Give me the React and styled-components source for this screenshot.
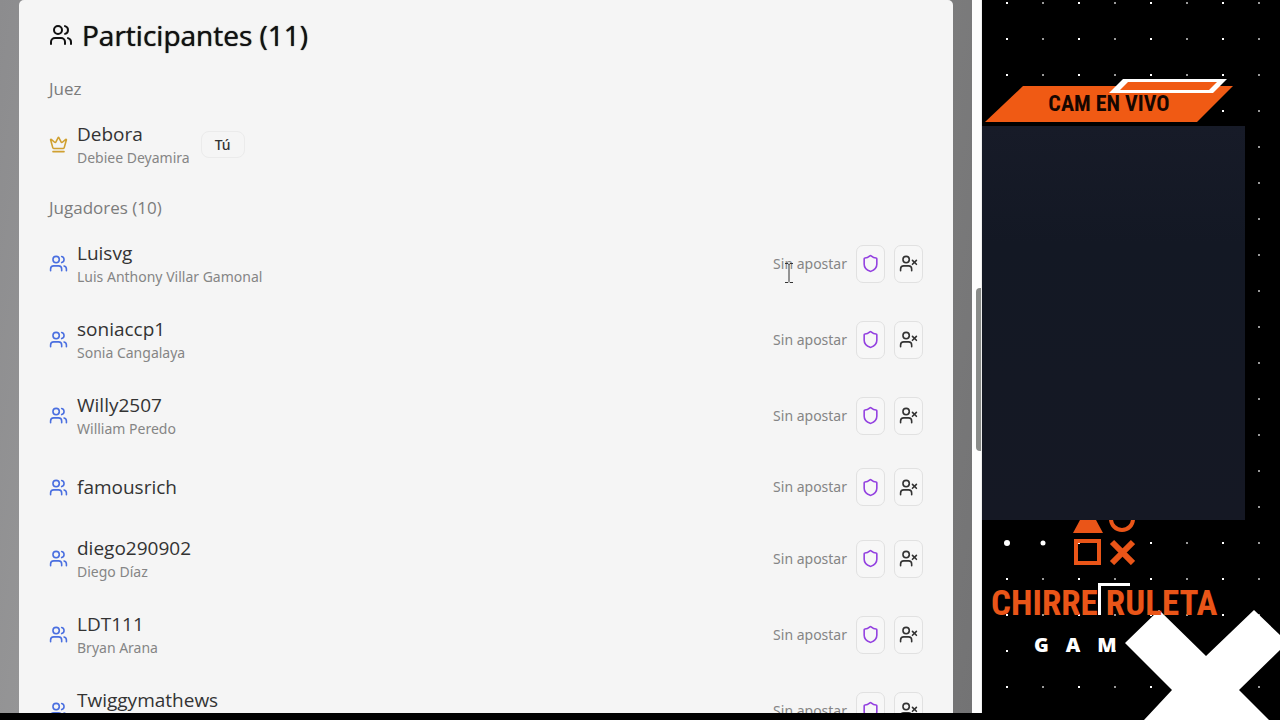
import React from 'react';
import styled, { createGlobalStyle } from 'styled-components';
import { Crown, Shield, Users, UserX } from 'lucide-react';
// /////////////////////////////////////////////////////////////////////////////////////////////////

const ORANGE = '#f05a14';
const BRAND_ORANGE = '#ea5518';
const SMALL_FONT = "'Noto Sans', 'Open Sans', sans-serif";
const CONDENSED_FONT = "'Roboto Condensed', 'DejaVu Sans Condensed', sans-serif";

const players = [
  { name: 'Luisvg', fullName: 'Luis Anthony Villar Gamonal', pointer: true },
  { name: 'soniaccp1', fullName: 'Sonia Cangalaya' },
  { name: 'Willy2507', fullName: 'William Peredo' },
  { name: 'famousrich' },
  { name: 'diego290902', fullName: 'Diego Díaz' },
  { name: 'LDT111', fullName: 'Bryan Arana' },
  { name: 'Twiggymathews', fullName: '\u00a0' },
];

const GlobalStyle = createGlobalStyle`
  * {
    box-sizing: border-box;
  }
  body {
    margin: 0;
    background-color: #000;
    font-family: 'Open Sans', 'Noto Sans', sans-serif;
  }
  h1, h2, p, ul {
    margin: 0;
    padding: 0;
    font-weight: 400;
  }
`;

const Page = styled.div`
  display: grid;
  height: 100vh;
  overflow: hidden;
  grid-template-columns: minmax(0, 1fr) 298px;
`;

const Browser = styled.main`
  display: flex;
  min-height: 0;
  overflow: hidden;
  margin-bottom: 7px;
  background-color: #fdfdfd;
`;

const Backdrop = styled.div`
  flex: 1;
  display: flex;
  padding: 0 19px;
  background: linear-gradient(100deg, #8c8c8e, #a0a0a0 30%, #8b8b8b 60%, #737374);
`;

const Panel = styled.section`
  flex: 1;
  padding: 16px 30px;
  border-radius: 5px 5px 0 0;
  background-color: #f5f5f5;
`;

const ScrollTrack = styled.div`
  width: 10px;
  display: flex;
  padding: 40vh 0 0 4px;
  border-right: 1px solid #eee;
`;

const ScrollThumb = styled.div`
  flex: 1;
  height: 163px;
  border-radius: 4px 0 0 4px;
  background-color: #8a8c8a;
`;

const Title = styled.h1`
  gap: 9px;
  display: flex;
  color: #111;
  font-size: 28px;
  line-height: 38px;
  align-items: center;
  margin-bottom: 23px;
  text-shadow: 0 0 1px #111;
`;

const Label = styled.h2`
  color: #7c7c7c;
  font-size: 17px;
  line-height: 24px;
  margin-bottom: 10px;
`;

const List = styled.ul`
  gap: 9px;
  display: flex;
  list-style: none;
  flex-direction: column;
  margin-bottom: 18px;
`;

const Row = styled.li`
  gap: 9px;
  display: flex;
  padding: 10px 0;
  align-items: center;
  color: ${({ $iconColor }) => $iconColor};
`;

const Name = styled.p`
  color: #333;
  font-size: 19px;
  line-height: 26px;
`;

const FullName = styled.p`
  color: #858585;
  font-size: 14px;
  line-height: 21px;
  font-family: ${SMALL_FONT};
`;

const Badge = styled.span`
  color: #333;
  padding: 0 13px;
  font-size: 14px;
  margin-left: 2px;
  font-weight: 500;
  line-height: 25px;
  border-radius: 8px;
  border: 1px solid #ebebeb;
  font-family: ${SMALL_FONT};
`;

const Status = styled.span`
  color: #858585;
  font-size: 14px;
  margin-left: auto;
  line-height: 20px;
  position: relative;
  font-family: ${SMALL_FONT};
`;

const Pointer = styled.svg`
  top: 9px;
  left: 12px;
  position: absolute;
`;

const IconButton = styled.button`
  width: 29px;
  height: 38px;
  padding: 0;
  display: flex;
  cursor: pointer;
  border-radius: 7px;
  align-items: center;
  justify-content: center;
  border: 1px solid #e1e1e1;
  background-color: #f7f7f7;
  color: ${({ $color }) => $color};
`;

const Overlay = styled.aside`
  display: flex;
  overflow: hidden;
  position: relative;
  flex-direction: column;
  background-color: #000;
  background-size: 72px 36px;
  background-image:
    radial-gradient(circle at 25px 3px, #fff 1px, transparent 1px),
    radial-gradient(circle at 61px 3px, #999 1px, transparent 1px);
`;

const Banner = styled.div`
  height: 43px;
  display: flex;
  margin: 79px 47px 4px 3px;
  position: relative;
  justify-content: center;
`;

const BannerShape = styled.svg`
  inset: 0;
  position: absolute;
`;

const BannerText = styled.span`
  z-index: 1;
  color: #160600;
  font-size: 22px;
  font-weight: 700;
  line-height: 26px;
  padding-top: 12px;
  white-space: nowrap;
  font-family: ${CONDENSED_FONT};
`;

const Camera = styled.div`
  height: 394px;
  margin-right: 35px;
  background: linear-gradient(#171b28, #131824 30%, #151824);
`;

const Brand = styled.div`
  display: flex;
  padding-left: 9px;
  align-items: flex-start;
  flex-direction: column;
`;

const Symbols = styled.svg`
  margin-left: 82px;
`;

const BrandName = styled.span`
  z-index: 1;
  font-size: 35px;
  font-weight: 700;
  line-height: 46px;
  margin-top: 16px;
  white-space: nowrap;
  color: ${BRAND_ORANGE};
  font-family: ${CONDENSED_FONT};
`;

const Games = styled.div`
  gap: 17px;
  color: #fff;
  display: flex;
  font-size: 20px;
  font-weight: 800;
  line-height: 26px;
  margin: 5px 0 0 43px;
`;

const Decoration = styled.svg`
  left: 0;
  bottom: 0;
  position: absolute;
`;

const Player = ({ name, fullName, pointer }) => (
  <Row $iconColor='#4a6fe0'>
    <Users size={19} />
    <div>
      <Name>{name}</Name>
      {fullName && <FullName>{fullName}</FullName>}
    </div>
    <Status>
      Sin apostar
      {pointer && (
        <Pointer width='8' height='20' fill='none' stroke='#333'>
          <path d='M0 .5H3L4 1.5L5 .5H8M4 1V18M0 19.5H3L4 18.5L5 19.5H8' />
        </Pointer>
      )}
    </Status>
    <IconButton type='button' $color='#9340e0' aria-label={`Hacer juez a ${name}`}>
      <Shield size={19} />
    </IconButton>
    <IconButton type='button' $color='#333' aria-label={`Expulsar a ${name}`}>
      <UserX size={19} />
    </IconButton>
  </Row>
);

const Stream = () => (
  <Overlay>
    <Banner>
      <BannerShape width='248' height='43' viewBox='0 0 248 43'>
        <path fill={ORANGE} d='M38 7H248L212 43H0Z' />
        <path fill='#fff' d='M138 0H242L228 14H124Z' />
        <path fill={ORANGE} d='M143 3H232L224 11H135Z' />
      </BannerShape>
      <BannerText>CAM EN VIVO</BannerText>
    </Banner>
    <Camera />
    <Brand>
      <Symbols width='62' height='45' viewBox='0 0 62 45' fill='none' stroke={BRAND_ORANGE}>
        <path fill={BRAND_ORANGE} stroke='none' d='M7 0H23L30 13H0Z' />
        <circle cx='49' cy='-1' r='11' strokeWidth='4' />
        <rect x='3' y='21' width='23' height='22' strokeWidth='4' />
        <path d='M39 22L60 43M60 22L39 43' strokeWidth='6' />
      </Symbols>
      <BrandName>CHIRRE RULETA</BrandName>
      <Games>
        <span>G</span>
        <span>A</span>
        <span>M</span>
      </Games>
    </Brand>
    <Decoration width='298' height='200' viewBox='0 0 298 200' fill='#fff'>
      <circle cx='25' cy='23' r='3' />
      <circle cx='61' cy='23' r='2.5' />
      <path d='M116 63H148V66H119V95H116Z' />
      <path d='M177 90L224 136L272 90L298 115V130L257 170L287 200H162L190 170L143 123Z' />
    </Decoration>
  </Overlay>
);

const App = () => (
  <>
    <GlobalStyle />
    <Page>
      <Browser>
        <Backdrop>
          <Panel>
            <Title>
              <Users size={24} />
              Participantes (11)
            </Title>
            <Label>Juez</Label>
            <List>
              <Row $iconColor='#d0a030'>
                <Crown size={19} />
                <div>
                  <Name>Debora</Name>
                  <FullName>Debiee Deyamira</FullName>
                </div>
                <Badge>Tú</Badge>
              </Row>
            </List>
            <Label>Jugadores (10)</Label>
            <List>
              {players.map((player) => <Player key={player.name} {...player} />)}
            </List>
          </Panel>
        </Backdrop>
        <ScrollTrack>
          <ScrollThumb />
        </ScrollTrack>
      </Browser>
      <Stream />
    </Page>
  </>
);

export default App;
